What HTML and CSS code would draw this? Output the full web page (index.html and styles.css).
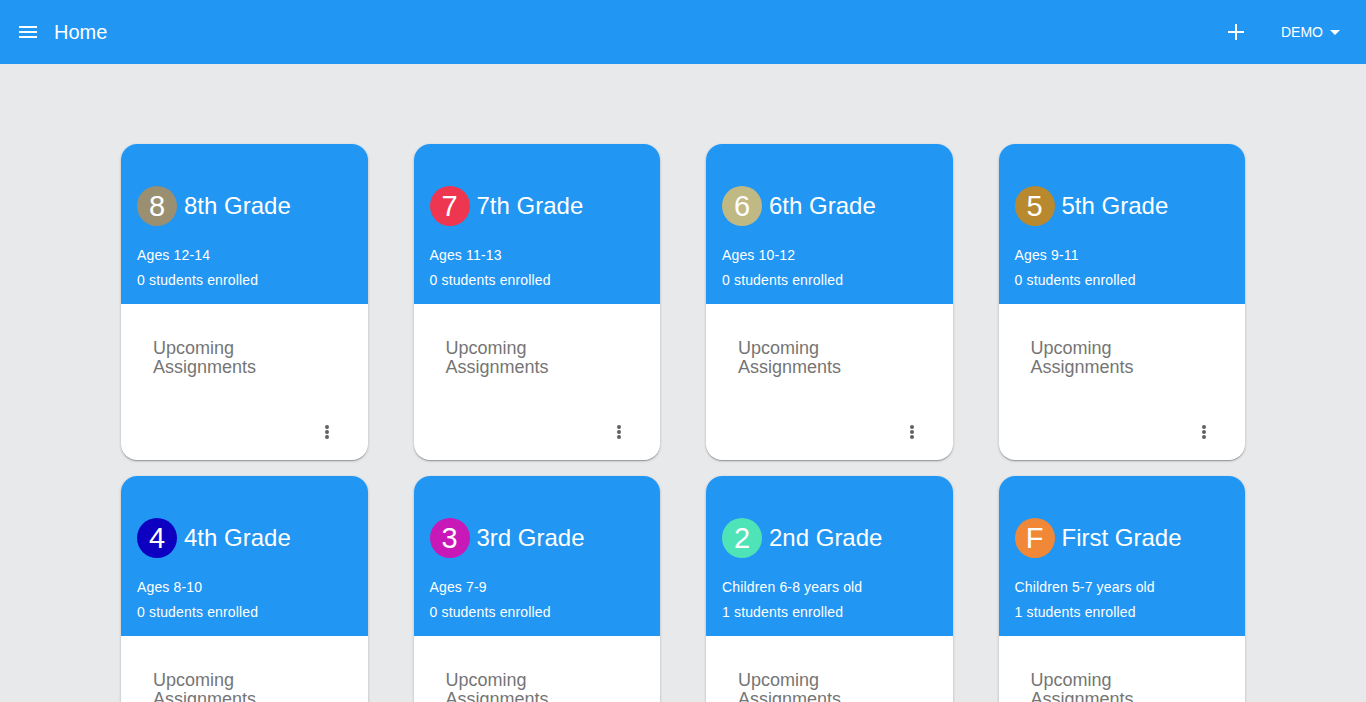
FILE: index.html
```html
<!DOCTYPE html>
<html lang="en">
<head>
<meta charset="utf-8">
<title>Home</title>
<link rel="stylesheet" href="styles.css">
</head>
<body>
<header class="appbar">
  <button class="icon-btn menu-btn" aria-label="Menu">
    <svg width="18" height="12" viewBox="0 0 18 12"><rect x="0" y="0" width="18" height="2" fill="#fff"/><rect x="0" y="5" width="18" height="2" fill="#fff"/><rect x="0" y="10" width="18" height="2" fill="#fff"/></svg>
  </button>
  <h1 class="appbar-title">Home</h1>
  <div class="spacer"></div>
  <button class="icon-btn add-btn" aria-label="Add">
    <svg width="16" height="16" viewBox="0 0 16 16"><rect x="7" y="0" width="2" height="16" fill="#fff"/><rect x="0" y="7" width="16" height="2" fill="#fff"/></svg>
  </button>
  <button class="user-btn">DEMO
    <svg width="10" height="5" viewBox="0 0 10 5"><polygon points="0,0 10,0 5,5" fill="#fff"/></svg>
  </button>
</header>

<main class="grid">
  <article class="card">
    <div class="card-head">
      <div class="card-title"><span class="avatar" style="background:#9a8f70">8</span><span>8th Grade</span></div>
      <p class="sub first">Ages 12-14</p>
      <p class="sub">0 students enrolled</p>
    </div>
    <div class="card-body">
      <p class="upcoming">Upcoming<br>Assignments</p>
      <div class="more"><svg width="6" height="16" viewBox="0 0 6 16"><circle cx="3" cy="3" r="2"/><circle cx="3" cy="8" r="2"/><circle cx="3" cy="13" r="2"/></svg></div>
    </div>
  </article>
  <article class="card">
    <div class="card-head">
      <div class="card-title"><span class="avatar" style="background:#ee3650">7</span><span>7th Grade</span></div>
      <p class="sub first">Ages 11-13</p>
      <p class="sub">0 students enrolled</p>
    </div>
    <div class="card-body">
      <p class="upcoming">Upcoming<br>Assignments</p>
      <div class="more"><svg width="6" height="16" viewBox="0 0 6 16"><circle cx="3" cy="3" r="2"/><circle cx="3" cy="8" r="2"/><circle cx="3" cy="13" r="2"/></svg></div>
    </div>
  </article>
  <article class="card">
    <div class="card-head">
      <div class="card-title"><span class="avatar" style="background:#c1b983">6</span><span>6th Grade</span></div>
      <p class="sub first">Ages 10-12</p>
      <p class="sub">0 students enrolled</p>
    </div>
    <div class="card-body">
      <p class="upcoming">Upcoming<br>Assignments</p>
      <div class="more"><svg width="6" height="16" viewBox="0 0 6 16"><circle cx="3" cy="3" r="2"/><circle cx="3" cy="8" r="2"/><circle cx="3" cy="13" r="2"/></svg></div>
    </div>
  </article>
  <article class="card">
    <div class="card-head">
      <div class="card-title"><span class="avatar" style="background:#b8892e">5</span><span>5th Grade</span></div>
      <p class="sub first">Ages 9-11</p>
      <p class="sub">0 students enrolled</p>
    </div>
    <div class="card-body">
      <p class="upcoming">Upcoming<br>Assignments</p>
      <div class="more"><svg width="6" height="16" viewBox="0 0 6 16"><circle cx="3" cy="3" r="2"/><circle cx="3" cy="8" r="2"/><circle cx="3" cy="13" r="2"/></svg></div>
    </div>
  </article>
  <article class="card">
    <div class="card-head">
      <div class="card-title"><span class="avatar" style="background:#0e00c0">4</span><span>4th Grade</span></div>
      <p class="sub first">Ages 8-10</p>
      <p class="sub">0 students enrolled</p>
    </div>
    <div class="card-body">
      <p class="upcoming">Upcoming<br>Assignments</p>
      <div class="more"><svg width="6" height="16" viewBox="0 0 6 16"><circle cx="3" cy="3" r="2"/><circle cx="3" cy="8" r="2"/><circle cx="3" cy="13" r="2"/></svg></div>
    </div>
  </article>
  <article class="card">
    <div class="card-head">
      <div class="card-title"><span class="avatar" style="background:#c818b8">3</span><span>3rd Grade</span></div>
      <p class="sub first">Ages 7-9</p>
      <p class="sub">0 students enrolled</p>
    </div>
    <div class="card-body">
      <p class="upcoming">Upcoming<br>Assignments</p>
      <div class="more"><svg width="6" height="16" viewBox="0 0 6 16"><circle cx="3" cy="3" r="2"/><circle cx="3" cy="8" r="2"/><circle cx="3" cy="13" r="2"/></svg></div>
    </div>
  </article>
  <article class="card">
    <div class="card-head">
      <div class="card-title"><span class="avatar" style="background:#4fe3b8">2</span><span>2nd Grade</span></div>
      <p class="sub first">Children 6-8 years old</p>
      <p class="sub">1 students enrolled</p>
    </div>
    <div class="card-body">
      <p class="upcoming">Upcoming<br>Assignments</p>
      <div class="more"><svg width="6" height="16" viewBox="0 0 6 16"><circle cx="3" cy="3" r="2"/><circle cx="3" cy="8" r="2"/><circle cx="3" cy="13" r="2"/></svg></div>
    </div>
  </article>
  <article class="card">
    <div class="card-head">
      <div class="card-title"><span class="avatar" style="background:#f08838">F</span><span>First Grade</span></div>
      <p class="sub first">Children 5-7 years old</p>
      <p class="sub">1 students enrolled</p>
    </div>
    <div class="card-body">
      <p class="upcoming">Upcoming<br>Assignments</p>
      <div class="more"><svg width="6" height="16" viewBox="0 0 6 16"><circle cx="3" cy="3" r="2"/><circle cx="3" cy="8" r="2"/><circle cx="3" cy="13" r="2"/></svg></div>
    </div>
  </article>
</main>
</body>
</html>
```

FILE: styles.css
```css
* { box-sizing: border-box; }

html, body {
  margin: 0;
  padding: 0;
}

body {
  background: #e8e9eb;
  font-family: "Liberation Sans", Arial, sans-serif;
  color: #fff;
  overflow: hidden;
}

.appbar {
  height: 64px;
  background: #2196f3;
  display: flex;
  align-items: center;
  padding: 0 16px 0 19px;
}

.icon-btn, .user-btn {
  background: none;
  border: 0;
  padding: 0;
  margin: 0;
  color: #fff;
  cursor: pointer;
  display: flex;
  align-items: center;
}

.menu-btn {
  width: 18px;
  height: 12px;
}

.appbar-title {
  margin: 0 0 0 17px;
  font-size: 20px;
  font-weight: 400;
  line-height: 24px;
}

.spacer { flex: 1; }

.add-btn {
  width: 16px;
  height: 16px;
  margin-right: 37px;
}

.user-btn {
  font-family: "Liberation Sans", Arial, sans-serif;
  font-size: 14px;
  line-height: 16px;
  gap: 7px;
  margin-right: 10px;
}

.user-btn svg { margin-top: 1px; }

.grid {
  width: 1124px;
  margin: 80px auto 0;
  display: grid;
  grid-template-columns: repeat(4, 1fr);
  column-gap: 46px;
  row-gap: 16px;
}

.card {
  height: 316px;
  border-radius: 16px;
  overflow: hidden;
  background: #fff;
  box-shadow: 0 1px 3px rgba(0,0,0,0.2), 0 1px 1px rgba(0,0,0,0.14), 0 2px 1px -1px rgba(0,0,0,0.12);
  display: flex;
  flex-direction: column;
}

.card-head {
  height: 160px;
  background: #2196f3;
  padding: 42px 16px 0;
}

.card-title {
  display: flex;
  align-items: center;
  gap: 7px;
  height: 40px;
  font-size: 24px;
}

.avatar {
  width: 40px;
  height: 40px;
  border-radius: 50%;
  display: flex;
  align-items: center;
  justify-content: center;
  font-size: 29px;
  color: #fff;
  flex: none;
}

.sub {
  margin: 5px 0 0;
  font-size: 14px;
  line-height: 20px;
  letter-spacing: 0.15px;
}

.sub.first { margin-top: 19px; }

.card-body {
  flex: 1;
  position: relative;
  padding: 35px 32px 0;
}

.upcoming {
  margin: 0;
  font-size: 18px;
  line-height: 19px;
  color: #757575;
}

.more {
  position: absolute;
  right: 38px;
  top: 120px;
  width: 6px;
  height: 16px;
  display: flex;
}

.more svg { fill: #616161; }
```
